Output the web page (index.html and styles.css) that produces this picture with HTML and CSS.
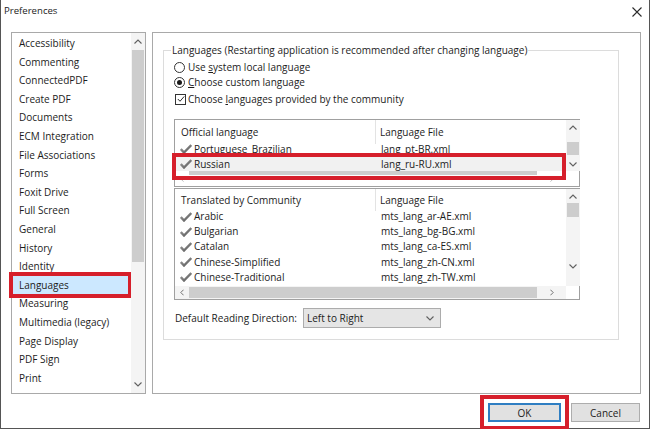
FILE: index.html
```html
<!DOCTYPE html>
<html>
<head>
<meta charset="utf-8">
<title>Preferences</title>
<link rel="stylesheet" href="styles.css">
</head>
<body>
<svg class="defs" width="0" height="0">
  <defs>
    <linearGradient id="chkg" x1="0" y1="0" x2="1" y2="1">
      <stop offset="0" stop-color="#a0a0a0"/>
      <stop offset="1" stop-color="#555"/>
    </linearGradient>
    <symbol id="tick" viewBox="0 0 12 10">
      <path d="M0.8 5 L4 8.5 L11.3 1" fill="none" stroke="url(#chkg)" stroke-width="2.4"/>
    </symbol>
    <symbol id="up" viewBox="0 0 8 5">
      <path d="M0.5 4.5 L4 1 L7.5 4.5" fill="none" stroke="#606060" stroke-width="1.1"/>
    </symbol>
    <symbol id="down" viewBox="0 0 8 5">
      <path d="M0.5 0.5 L4 4 L7.5 0.5" fill="none" stroke="#606060" stroke-width="1.1"/>
    </symbol>
    <symbol id="left" viewBox="0 0 5 8">
      <path d="M4.5 0.5 L1 4 L4.5 7.5" fill="none" stroke="#606060" stroke-width="1.1"/>
    </symbol>
    <symbol id="right" viewBox="0 0 5 8">
      <path d="M0.5 0.5 L4 4 L0.5 7.5" fill="none" stroke="#606060" stroke-width="1.1"/>
    </symbol>
  </defs>
</svg>
<div class="window">
  <div class="titlebar">
    <span class="title">Preferences</span>
    <svg class="close" viewBox="0 0 10 10" width="10" height="10"><path d="M0.5 0.5 L9.5 9.5 M9.5 0.5 L0.5 9.5" stroke="#2b2b2b" stroke-width="1.1"/></svg>
  </div>
  <div class="main">
    <div class="catlist">
      <ul class="items">
        <li>Accessibility</li>
        <li>Commenting</li>
        <li>ConnectedPDF</li>
        <li>Create PDF</li>
        <li>Documents</li>
        <li>ECM Integration</li>
        <li>File Associations</li>
        <li>Forms</li>
        <li>Foxit Drive</li>
        <li>Full Screen</li>
        <li>General</li>
        <li>History</li>
        <li>Identity</li>
        <li class="sel">Languages</li>
        <li>Measuring</li>
        <li>Multimedia (legacy)</li>
        <li>Page Display</li>
        <li>PDF Sign</li>
        <li>Print</li>
      </ul>
      <div class="vscroll cat">
        <div class="arr"><svg width="8" height="5"><use href="#up"/></svg></div>
        <div class="thumb"></div>
        <div class="spacer"></div>
        <div class="arr"><svg width="8" height="5"><use href="#down"/></svg></div>
      </div>
    </div>
    <div class="panel">
      <div class="group">
        <div class="legend">Languages (Restarting application is recommended after changing language)</div>
        <div class="opt o1"><span class="radio"></span><span>Use <u>s</u>ystem local language</span></div>
        <div class="opt o2"><span class="radio on"></span><span><u>C</u>hoose custom language</span></div>
        <div class="opt chk"><span class="checkbox"><svg viewBox="0 0 10 10" width="8" height="8"><path d="M1 5 L3.8 7.8 L9 1.8" fill="none" stroke="#222" stroke-width="1.2"/></svg></span><span>Choose <u>l</u>anguages provided by the community</span></div>

        <div class="list official">
          <div class="body">
            <div class="hdr"><span class="c1">Official language</span><span class="c2">Language File</span></div>
            <div class="rows shifted">
              <div class="row"><span class="c1"><svg class="tk" width="12" height="10"><use href="#tick"/></svg>Portuguese_Brazilian</span><span class="c2">lang_pt-BR.xml</span></div>
              <div class="row cur"><span class="c1"><svg class="tk" width="12" height="10"><use href="#tick"/></svg>Russian</span><span class="c2">lang_ru-RU.xml</span></div>
            </div>
          </div>
          <div class="vscroll small1">
            <div class="arr"><svg width="8" height="5"><use href="#up"/></svg></div>
            <div class="thumb"></div>
            <div class="arr"><svg width="8" height="5"><use href="#down"/></svg></div>
          </div>
          <div class="hscroll ghost">
            <div class="harr"><svg width="4" height="6"><use href="#left"/></svg></div>
            <div class="hthumb"></div>
            <div class="harr"><svg width="4" height="6"><use href="#right"/></svg></div>
          </div>
          <div class="corner"></div>
        </div>

        <div class="list community">
          <div class="body">
            <div class="hdr"><span class="c1">Translated by Community</span><span class="c2">Language File</span></div>
            <div class="rows">
              <div class="row"><span class="c1"><svg class="tk" width="12" height="10"><use href="#tick"/></svg>Arabic</span><span class="c2">mts_lang_ar-AE.xml</span></div>
              <div class="row"><span class="c1"><svg class="tk" width="12" height="10"><use href="#tick"/></svg>Bulgarian</span><span class="c2">mts_lang_bg-BG.xml</span></div>
              <div class="row"><span class="c1"><svg class="tk" width="12" height="10"><use href="#tick"/></svg>Catalan</span><span class="c2">mts_lang_ca-ES.xml</span></div>
              <div class="row"><span class="c1"><svg class="tk" width="12" height="10"><use href="#tick"/></svg>Chinese-Simplified</span><span class="c2">mts_lang_zh-CN.xml</span></div>
              <div class="row"><span class="c1"><svg class="tk" width="12" height="10"><use href="#tick"/></svg>Chinese-Traditional</span><span class="c2">mts_lang_zh-TW.xml</span></div>
            </div>
          </div>
          <div class="vscroll small2">
            <div class="arr"><svg width="8" height="5"><use href="#up"/></svg></div>
            <div class="thumb"></div>
            <div class="spacer"></div>
            <div class="arr"><svg width="8" height="5"><use href="#down"/></svg></div>
          </div>
          <div class="hscroll">
            <div class="harr"><svg width="4" height="7"><use href="#left"/></svg></div>
            <div class="hthumb"></div>
            <div class="harr"><svg width="4" height="7"><use href="#right"/></svg></div>
          </div>
          <div class="corner"></div>
        </div>

        <div class="dir-row">
          <span class="dir-label">Default Reading Direction:</span>
          <div class="select"><span>Left to Right</span><svg width="8" height="5"><use href="#down"/></svg></div>
        </div>
      </div>
    </div>
  </div>
  <div class="footer">
    <button class="btn ok">OK</button>
    <button class="btn">Cancel</button>
  </div>
</div>
</body>
</html>
```

FILE: styles.css
```css
html, body {
  margin: 0;
  padding: 0;
  background: #fff;
}
body {
  width: 650px;
  height: 429px;
  overflow: hidden;
  font-family: "Open Sans", "Noto Sans", sans-serif;
  font-size: 10px;
  color: #1c1c1c;
}
.defs {
  position: absolute;
  width: 0;
  height: 0;
}
.window {
  box-sizing: border-box;
  width: 650px;
  height: 429px;
  border-left: 1px solid #555;
  border-right: 1px solid #555;
  border-bottom: 1px solid #555;
  display: flex;
  flex-direction: column;
  background: #fff;
}
.titlebar {
  height: 32px;
  flex: none;
  display: flex;
  justify-content: space-between;
  align-items: flex-start;
  padding: 4px 7px 0 3px;
  box-sizing: border-box;
}
.title {
  line-height: 14px;
  font-size: 9.6px;
}
.close {
  margin-top: 3px;
}
.main {
  height: 362px;
  flex: none;
  display: flex;
  padding-left: 10px;
  gap: 6px;
}
.catlist {
  width: 135px;
  box-sizing: border-box;
  border: 1px solid #a9a9a9;
  display: flex;
}
.items {
  list-style: none;
  margin: 0;
  padding: 1px 0 0 0;
  flex: 1;
}
.items li {
  height: 18.6px;
  line-height: 18.6px;
  padding-left: 7px;
  white-space: nowrap;
}
.items li.sel {
  margin: 0 3px 0 1px;
  padding-left: 6px;
  background: #cce8ff;
  outline: 4px solid #d61f2b;
}
.vscroll {
  width: 14px;
  display: flex;
  flex-direction: column;
  background: #f4f4f4;
}
.vscroll .arr {
  display: flex;
  align-items: center;
  justify-content: center;
  flex: none;
}
.vscroll .thumb {
  background: #cdcdcd;
  flex: none;
  margin: 0 1px;
}
.vscroll .spacer {
  flex: 1;
}
.vscroll.cat .arr {
  height: 17px;
}
.vscroll.cat .thumb {
  height: 212px;
}
.panel {
  width: 489px;
  box-sizing: border-box;
  border: 1px solid #a9a9a9;
}
.group {
  margin: 17px 21px 0 10px;
  height: 288px;
  border: 1px solid #dcdcdc;
}
.legend {
  margin: -8px 0 0 7px;
  width: fit-content;
  line-height: 15px;
  padding: 0 1px;
  background: #fff;
}
.opt {
  display: flex;
  align-items: center;
  margin-left: 10px;
  white-space: nowrap;
}
.opt.o1 {
  margin-top: 1px;
  height: 16px;
}
.opt.o2 {
  height: 14px;
}
.opt.chk {
  height: 16px;
  margin-top: 2px;
  margin-left: 11px;
}
.radio {
  box-sizing: border-box;
  width: 11px;
  height: 11px;
  border: 1px solid #333;
  border-radius: 50%;
  margin-right: 3px;
  display: flex;
  align-items: center;
  justify-content: center;
  flex: none;
}
.radio.on::after {
  content: "";
  width: 5px;
  height: 5px;
  border-radius: 50%;
  background: #1a1a1a;
}
.checkbox {
  box-sizing: border-box;
  width: 11px;
  height: 11px;
  border: 1px solid #333;
  margin-right: 2px;
  display: flex;
  align-items: center;
  justify-content: center;
  flex: none;
}
.list {
  box-sizing: border-box;
  width: 406px;
  margin-left: 10px;
  border: 1px solid #a0a0a0;
  display: grid;
  grid-template-columns: 1fr 13px;
  position: relative;
}
.list.official {
  margin-top: 12px;
  height: 68px;
  grid-template-rows: 51px 15px;
}
.list.community {
  margin-top: 1px;
  height: 112px;
  grid-template-rows: 97px 13px;
}
.body {
  overflow: hidden;
  white-space: nowrap;
}
.hdr {
  display: grid;
  grid-template-columns: 201px 1fr;
  position: relative;
  z-index: 1;
  background: #fff;
}
.official .hdr {
  height: 24px;
  line-height: 24px;
}
.community .hdr {
  height: 20px;
  line-height: 22px;
}
.hdr .c1 {
  padding-left: 6px;
  border-right: 1px solid #e3e3e3;
}
.hdr .c2 {
  padding-left: 4px;
}
.rows.shifted {
  margin-top: -3px;
}
.row {
  display: grid;
  grid-template-columns: 201px 1fr;
  height: 15.2px;
  line-height: 15.2px;
}
.official .row {
  height: 15px;
  line-height: 16px;
}
.row.cur {
  background: #f1f1f1;
}
.row .c1 {
  padding-left: 5px;
  display: flex;
  align-items: center;
}
.row .c2 {
  padding-left: 5px;
}
.tk {
  margin-right: 2px;
  flex: none;
}
.vscroll.small1 .arr {
  height: 15px;
}
.vscroll.small1 .thumb {
  height: 13px;
  margin-top: 7px;
  margin-bottom: 2px;
}
.vscroll.small2 .arr {
  height: 14px;
}
.vscroll.small2 .thumb {
  height: 14px;
}
.vscroll.small2 .arr:last-child {
  height: 22px;
  align-items: flex-start;
  padding-top: 1px;
}
.hscroll {
  display: flex;
  align-items: stretch;
  background: #f4f4f4;
}
.harr {
  width: 14px;
  display: flex;
  align-items: center;
  justify-content: center;
}
.hthumb {
  width: 348px;
  background: #cdcdcd;
  margin: 1px 0;
}
.hscroll .harr:last-child {
  flex: 1;
}
.hscroll.ghost {
  background: #fff;
  align-items: flex-start;
}
.hscroll.ghost .hthumb {
  height: 4px;
  margin: 0;
}
.hscroll.ghost .harr {
  height: 15px;
  opacity: 0.5;
}
.corner {
  background: #fff;
}
.official::after {
  content: "";
  position: absolute;
  left: -3px;
  top: 33px;
  width: 394px;
  height: 27px;
  box-sizing: border-box;
  border: 4px solid #d61f2b;
  pointer-events: none;
}
.dir-row {
  display: flex;
  align-items: center;
  margin: 8px 0 0 11px;
  white-space: nowrap;
}
.dir-label {
  width: 128px;
}
.select {
  box-sizing: border-box;
  width: 138px;
  height: 20px;
  background: #e5e5e5;
  border: 1px solid #acacac;
  display: flex;
  align-items: center;
  justify-content: space-between;
  padding: 0 6px 0 3px;
}
.footer {
  flex: 1;
  display: flex;
  justify-content: flex-end;
  align-items: flex-start;
  gap: 10px;
  padding: 9px 9px 0 0;
}
.btn {
  box-sizing: border-box;
  height: 19px;
  margin: 0;
  padding: 0;
  font-family: "Open Sans", "Noto Sans", sans-serif;
  font-size: 10px;
  color: #1c1c1c;
  background: #e1e1e1;
  border: 1px solid #adadad;
  width: 69px;
}
.btn.ok {
  width: 73px;
  border: 2px solid #2f7ec2;
  outline: 4px solid #d61f2b;
  outline-offset: 4px;
}
```
